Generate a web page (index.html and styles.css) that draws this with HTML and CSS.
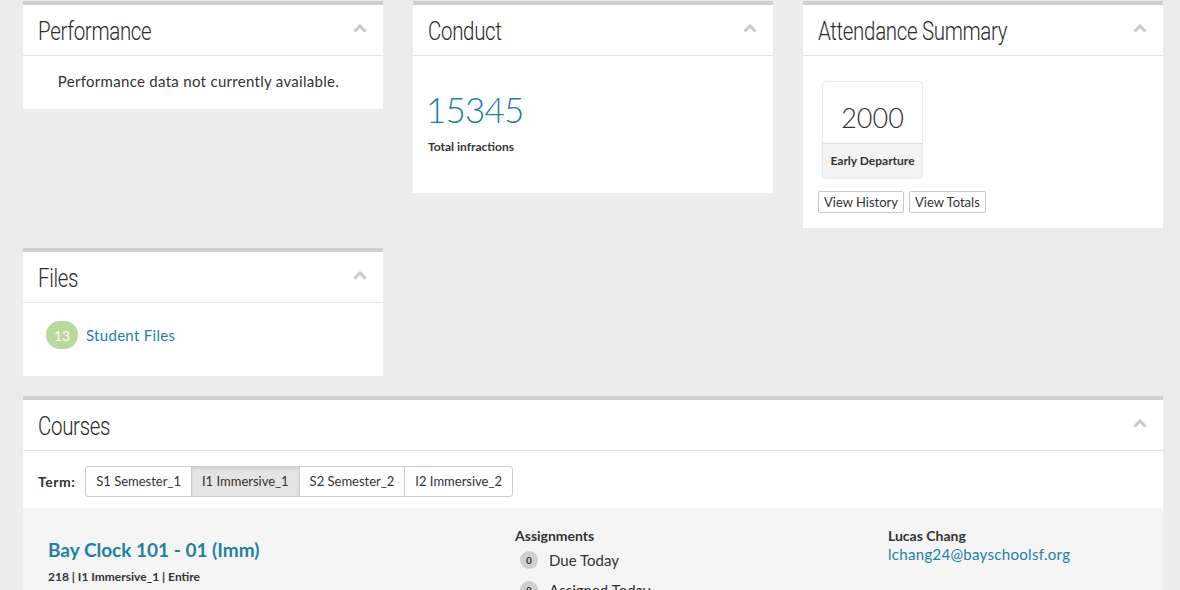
FILE: index.html
```html
<!DOCTYPE html>
<html>
<head>
<meta charset="utf-8">
<link rel="stylesheet" href="styles.css">
</head>
<body>
<div class="page">
  <div class="grid3">
    <section class="card">
      <header class="card-head"><h2>Performance</h2><span class="chev"><svg width="14" height="9" viewBox="0 0 14 9"><path d="M1.5 7.5 L7 2 L12.5 7.5" fill="none" stroke="#c7c9cd" stroke-width="3"/></svg></span></header>
      <div class="card-body perf">Performance data not currently available.</div>
    </section>
    <section class="card">
      <header class="card-head"><h2>Conduct</h2><span class="chev"><svg width="14" height="9" viewBox="0 0 14 9"><path d="M1.5 7.5 L7 2 L12.5 7.5" fill="none" stroke="#c7c9cd" stroke-width="3"/></svg></span></header>
      <div class="card-body conduct">
        <div class="big">15345</div>
        <div class="lbl">Total infractions</div>
      </div>
    </section>
    <section class="card">
      <header class="card-head"><h2>Attendance Summary</h2><span class="chev"><svg width="14" height="9" viewBox="0 0 14 9"><path d="M1.5 7.5 L7 2 L12.5 7.5" fill="none" stroke="#c7c9cd" stroke-width="3"/></svg></span></header>
      <div class="card-body att">
        <div class="tile">
          <div class="tile-num">2000</div>
          <div class="tile-lbl">Early Departure</div>
        </div>
        <div class="btns">
          <button class="btn">View History</button>
          <button class="btn">View Totals</button>
        </div>
      </div>
    </section>
    <section class="card">
      <header class="card-head"><h2>Files</h2><span class="chev"><svg width="14" height="9" viewBox="0 0 14 9"><path d="M1.5 7.5 L7 2 L12.5 7.5" fill="none" stroke="#c7c9cd" stroke-width="3"/></svg></span></header>
      <div class="card-body files">
        <span class="pill">13</span><a class="link">Student Files</a>
      </div>
    </section>
  </div>
  <section class="card wide">
    <header class="card-head"><h2>Courses</h2><span class="chev"><svg width="14" height="9" viewBox="0 0 14 9"><path d="M1.5 7.5 L7 2 L12.5 7.5" fill="none" stroke="#c7c9cd" stroke-width="3"/></svg></span></header>
    <div class="terms">
      <span class="term-lbl">Term:</span>
      <div class="tabs">
        <span class="tab">S1 Semester_1</span>
        <span class="tab active">I1 Immersive_1</span>
        <span class="tab">S2 Semester_2</span>
        <span class="tab">I2 Immersive_2</span>
      </div>
    </div>
    <div class="course">
      <div class="c-info">
        <div class="c-title">Bay Clock 101 - 01 (Imm)</div>
        <div class="c-meta">218 | I1 Immersive_1 | Entire</div>
      </div>
      <div class="c-assign">
        <div class="c-h">Assignments</div>
        <div class="a-row"><span class="dot">0</span>Due Today</div>
        <div class="a-row"><span class="dot">0</span>Assigned Today</div>
      </div>
      <div class="c-teacher">
        <div class="c-h">Lucas Chang</div>
        <a class="link">lchang24@bayschoolsf.org</a>
      </div>
    </div>
  </section>
</div>
</body>
</html>
```

FILE: styles.css
```css
* { box-sizing: border-box; }
html, body { margin: 0; padding: 0; }
body {
  background: #ececec;
  font-family: "Lato", "Liberation Sans", sans-serif;
  color: #333;
  overflow: hidden;
  height: 590px;
}
.page {
  padding: 1px 0 0 23px;
  width: 1163px;
}
.grid3 {
  display: grid;
  grid-template-columns: 360px 360px 360px;
  column-gap: 30px;
  row-gap: 20px;
  align-items: start;
}
.card {
  background: #fff;
  border-top: 4px solid #cfcfd1;
}
.wide { margin-top: 20px; }
.card-head {
  display: flex;
  align-items: center;
  justify-content: space-between;
  height: 51px;
  padding: 0 16px 0 15px;
  border-bottom: 1px solid #e3e3e3;
}
.card-head h2 {
  margin: 0;
  margin-top: 2px;
  font-family: "Roboto", sans-serif;
  font-weight: 300;
  font-size: 25px;
  color: #2b2b2b;
  letter-spacing: -0.4px;
  transform: scaleX(0.82);
  transform-origin: left center;
  white-space: nowrap;
}
.chev { display: flex; margin-top: -3px; }
.perf {
  text-align: center;
  font-size: 15px;
  letter-spacing: 0.3px;
  padding: 16px 9px 19px 0;
}
.conduct { padding: 33px 15px 39px; }
.big {
  font-size: 35px;
  color: #1d80a6;
  line-height: 40px;
  font-weight: 300;
  letter-spacing: -0.8px;
  margin-left: -2px;
}
.lbl {
  font-size: 12px;
  font-weight: bold;
  margin-top: 10px;
}
.att { padding: 26px 15px 15px; }
.tile {
  margin-left: 5px;
  width: 99px;
  border-radius: 3px;
  box-shadow: 0 0 2px rgba(0,0,0,0.3);
  overflow: hidden;
}
.tile-num {
  height: 62px;
  text-align: center;
  font-size: 27px;
  font-weight: 300;
  padding-top: 21px;
  line-height: 30px;
  border-bottom: 1px solid #ddd;
}
.tile-lbl {
  background: #f3f3f3;
  text-align: center;
  font-size: 12px;
  font-weight: bold;
  height: 34px;
  line-height: 34px;
}
.btns { display: flex; gap: 5px; margin-top: 13px; }
.btn {
  font-family: "Lato", sans-serif;
  font-size: 13px;
  color: #333;
  background: #fff;
  border: 1px solid #c9c9c9;
  border-radius: 2px;
  height: 22px;
  padding: 0 5px;
}
.files {
  display: flex;
  align-items: center;
  padding: 18px 23px 27px;
}
.pill {
  width: 32px;
  height: 28px;
  border-radius: 14px;
  background: #b7da9c;
  color: #fff;
  font-size: 14px;
  display: flex;
  align-items: center;
  justify-content: center;
  margin-right: 8px;
}
.link { color: #1d80a6; font-size: 15px; letter-spacing: 0.3px; }
.terms {
  display: flex;
  align-items: center;
  padding: 15px 15px 11px;
}
.term-lbl { font-weight: bold; font-size: 14px; letter-spacing: 0.5px; margin-right: 10px; }
.tabs {
  display: flex;
  border: 1px solid #ccc;
  border-radius: 3px;
  overflow: hidden;
}
.tab {
  font-size: 13px;
  padding: 0 10px;
  height: 29px;
  line-height: 29px;
  border-left: 1px solid #ccc;
}
.tab:first-child { border-left: none; }
.tab.active { background: #e4e4e4; box-shadow: inset 0 2px 3px rgba(0,0,0,0.08); }
.course {
  background: #f5f5f5;
  display: grid;
  grid-template-columns: 467px 373px 1fr;
  padding: 20px 25px 0;
  height: 120px;
}
.c-title {
  color: #1d80a6;
  font-weight: bold;
  font-size: 19px;
  margin-top: 10px;
}
.c-meta { font-size: 12px; font-weight: bold; margin-top: 8px; }
.c-assign, .c-teacher { margin-top: -1px; }
.c-h { font-size: 14px; font-weight: bold; }
.a-row {
  display: flex;
  align-items: center;
  font-size: 15px;
  margin-top: 6px;
  height: 20px;
  margin-bottom: 10px;
}
.dot {
  width: 18px;
  height: 18px;
  border-radius: 9px;
  background: #cfcfd1;
  font-size: 10px;
  font-weight: bold;
  display: inline-flex;
  align-items: center;
  justify-content: center;
  margin: 0 11px 0 5px;
}
```
